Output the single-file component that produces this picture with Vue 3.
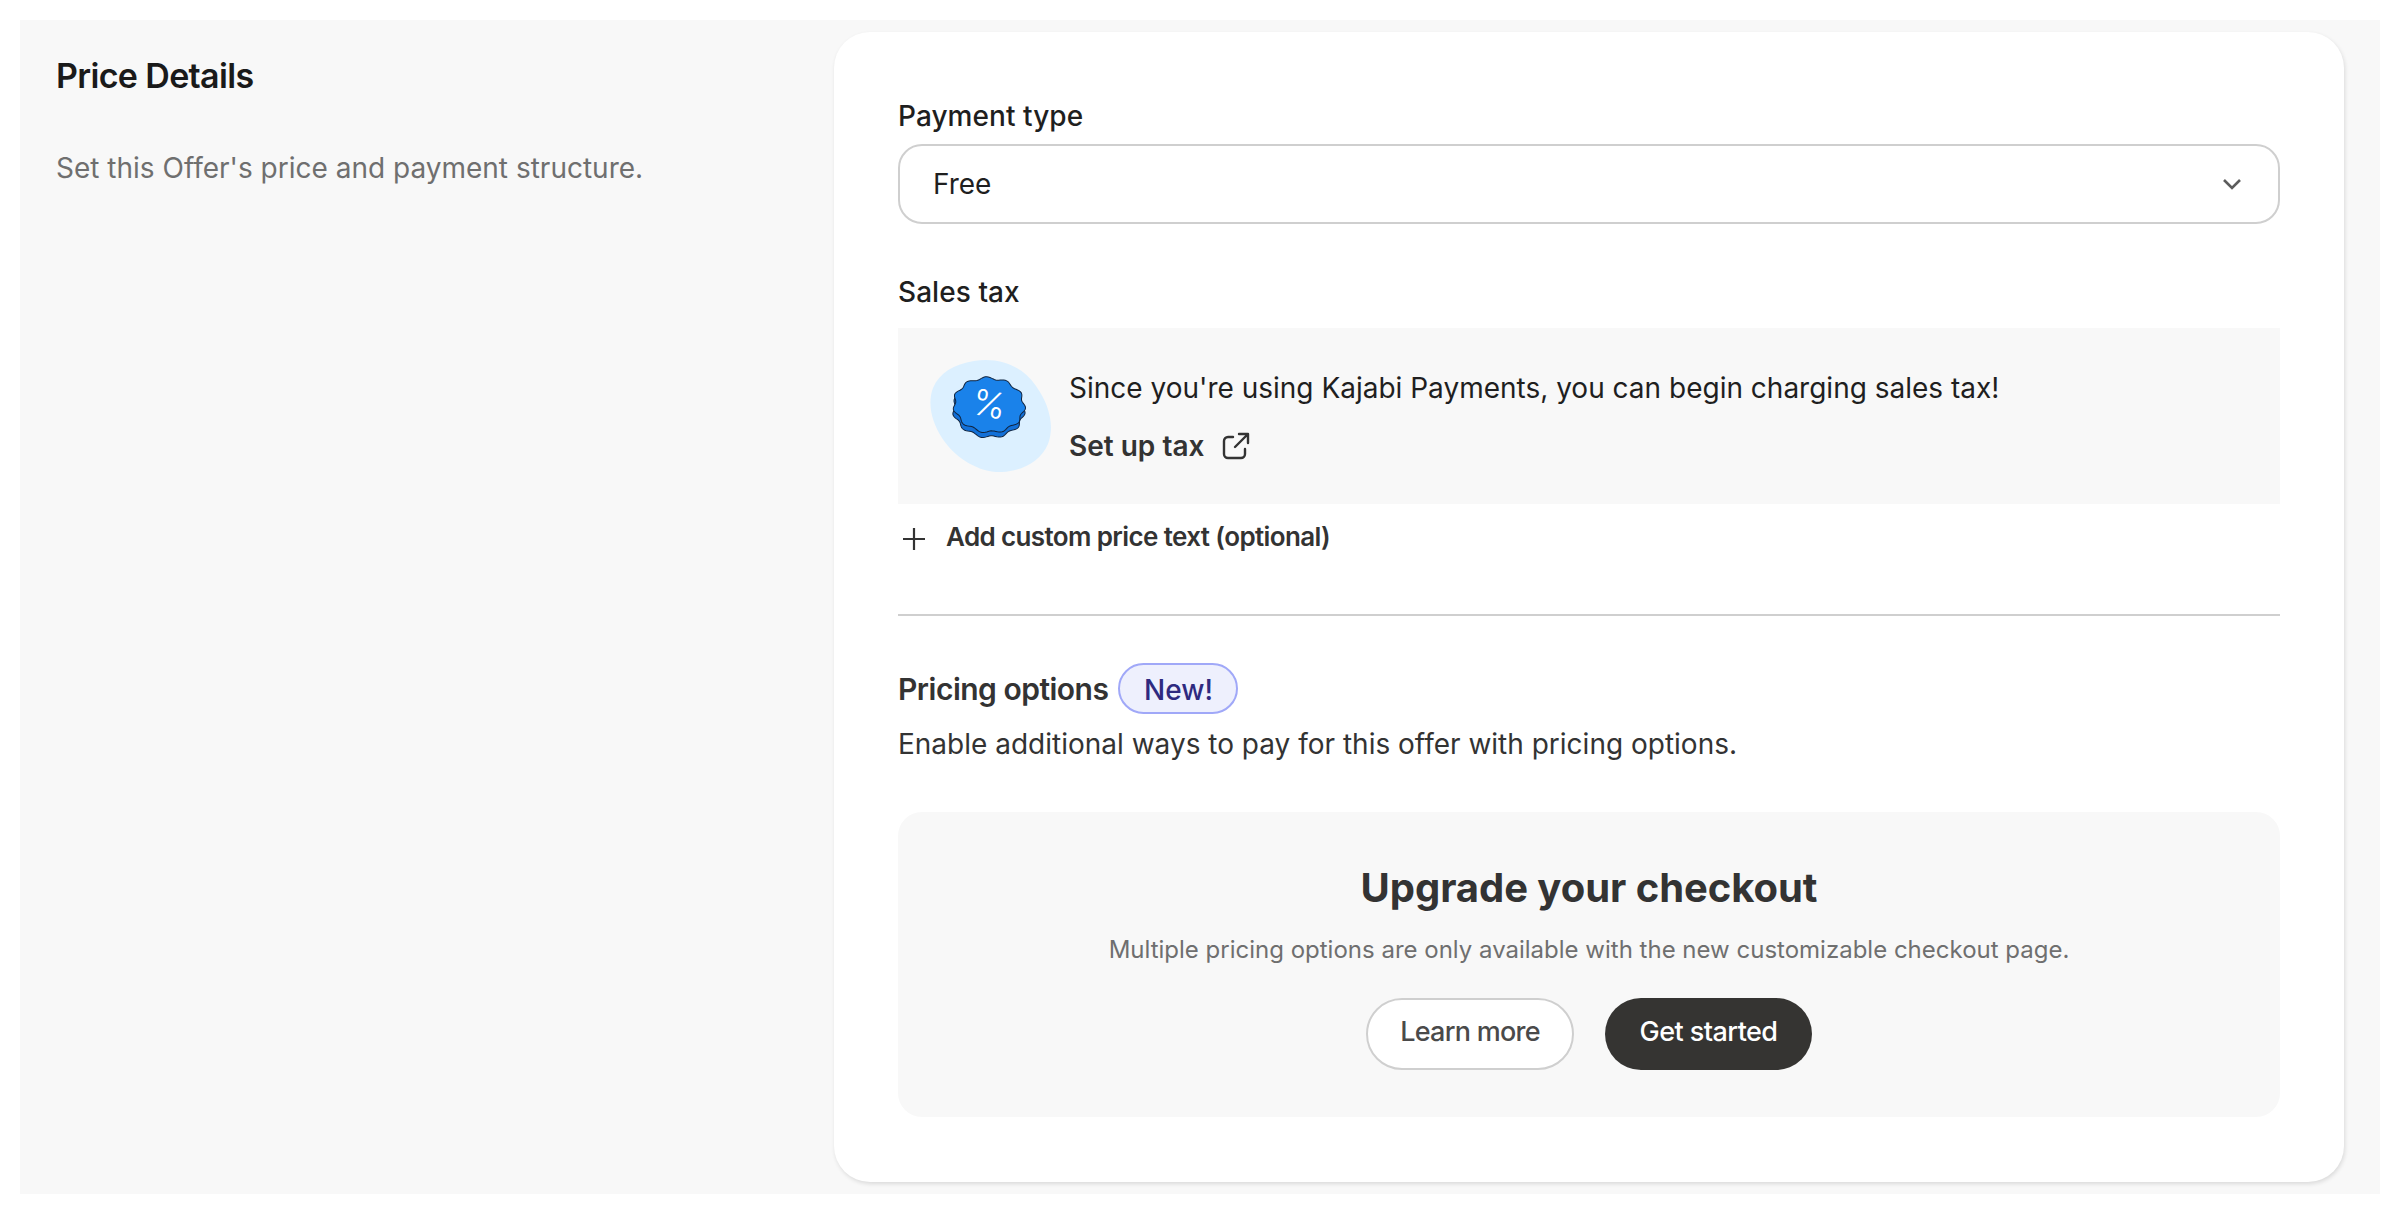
<script setup>
// wavy sticker outline for the tax badge
function wavy(cx, cy, rx, ry, lobes, amp) {
  let d = '';
  const steps = 144;
  for (let i = 0; i < steps; i++) {
    const a = (i / steps) * Math.PI * 2;
    const k = 1 + amp * Math.cos(a * lobes);
    const x = cx + Math.cos(a) * rx * k;
    const y = cy + Math.sin(a) * ry * k;
    d += (i ? 'L' : 'M') + x.toFixed(2) + ' ' + y.toFixed(2);
  }
  return d + 'Z';
}

const topFace = wavy(59, 43, 35, 27, 11, 0.045);
const bottomFace = wavy(59, 48, 35, 27, 11, 0.045);
</script>

<template>
  <div class="panel">
    <div class="intro">
      <h2 class="intro-title">Price Details</h2>
      <p class="intro-text">Set this Offer's price and payment structure.</p>
    </div>

    <div class="card">
      <label class="field-label">Payment type</label>
      <div class="select">
        <span>Free</span>
        <svg class="chevron" width="20" height="12" viewBox="0 0 20 12" fill="none">
          <path d="M2 2l8 8 8-8" stroke="#5c5c5c" stroke-width="2.6" />
        </svg>
      </div>

      <div class="field-label tax-label">Sales tax</div>
      <div class="tax-box">
        <svg class="tax-art" width="122" height="112" viewBox="0 0 122 112">
          <path
            d="M44 1C70 -3 92 6 106 26C119 44 125 66 118 84C110 103 88 113 66 112C44 110 24 96 12 78C2 62 -3 44 3 28C9 13 24 4 44 1Z"
            fill="#dcf0ff"
          />
          <g transform="translate(0 2) rotate(5 59 44)">
            <path :d="bottomFace" fill="#1270d8" stroke="#10243f" stroke-width="1" />
            <path :d="topFace" fill="#1a82ea" stroke="#10243f" stroke-width="1" />
            <text class="tax-percent" x="59" y="55" text-anchor="middle" transform="rotate(6 59 44)">%</text>
          </g>
        </svg>
        <div class="tax-copy">
          <div class="tax-text">Since you're using Kajabi Payments, you can begin charging sales tax!</div>
          <div class="tax-link">
            <span>Set up tax</span>
            <svg width="28" height="28" viewBox="0 0 28 28" fill="none" stroke="#333" stroke-width="2.4" stroke-linecap="round" stroke-linejoin="round">
              <path d="M11 5H6a4 4 0 0 0-4 4v13a4 4 0 0 0 4 4h13a4 4 0 0 0 4-4v-5" />
              <path d="M13 15L26 2M17 2h9v9" />
            </svg>
          </div>
        </div>
      </div>

      <div class="add-row">
        <svg class="add-icon" width="22" height="22" viewBox="0 0 22 22" fill="none" stroke="#333" stroke-width="2.2">
          <path d="M11 0v22M0 11h22" />
        </svg>
        <span>Add custom price text (optional)</span>
      </div>

      <hr class="divider" />

      <div class="options-head">
        <span class="options-title">Pricing options</span>
        <span class="new-badge">New!</span>
      </div>
      <p class="options-text">Enable additional ways to pay for this offer with pricing options.</p>

      <div class="upgrade">
        <h3 class="upgrade-title">Upgrade your checkout</h3>
        <p class="upgrade-text">Multiple pricing options are only available with the new customizable checkout page.</p>
        <div class="upgrade-actions">
          <button class="btn btn-light">Learn more</button>
          <button class="btn btn-dark">Get started</button>
        </div>
      </div>
    </div>
  </div>
</template>

<style>
html, body {
  background: #fff;
}
</style>

<style scoped>
.panel {
  margin: 20px 20px 0;
  padding: 12px 36px 12px 36px;
  height: 1174px;
  box-sizing: border-box;
  display: flex;
  justify-content: space-between;
  background: #f8f8f8;
  font-family: Inter, "Liberation Sans", sans-serif;
  color: #333;
}

.intro-title {
  margin: 22px 0 0;
  font-size: 34px;
  line-height: 44px;
  font-weight: 600;
  letter-spacing: -0.65px;
  color: #1a1a1a;
}

.intro-text {
  margin: 50px 0 0;
  font-size: 28px;
  line-height: 40px;
  color: #6f6f6f;
}

.card {
  width: 1510px;
  height: 1150px;
  box-sizing: border-box;
  padding: 64px;
  background: #fff;
  border-radius: 36px;
  box-shadow: 1px 2px 4px rgba(0, 0, 0, 0.12);
}

.field-label {
  display: block;
  font-size: 28px;
  line-height: 40px;
  font-weight: 500;
  letter-spacing: 0.06px;
  color: #1f1f1f;
}

.select {
  margin-top: 8px;
  height: 80px;
  box-sizing: border-box;
  padding: 0 36px 0 33px;
  display: flex;
  align-items: center;
  justify-content: space-between;
  border: 2px solid #cfcfcf;
  border-radius: 24px;
  font-size: 28px;
  color: #1f1f1f;
}

.tax-label {
  margin-top: 48px;
}

.tax-box {
  margin-top: 16px;
  height: 176px;
  box-sizing: border-box;
  padding: 32px 32px 0;
  display: flex;
  gap: 17px;
  background: #f8f8f8;
}

.tax-percent {
  font-size: 36px;
  font-weight: 300;
  fill: #fff;
}

.tax-text {
  margin-top: 8px;
  font-size: 28px;
  line-height: 40px;
  color: #1f1f1f;
}

.tax-link {
  margin-top: 18px;
  display: flex;
  align-items: center;
  gap: 18px;
  font-size: 28px;
  line-height: 40px;
  font-weight: 600;
  color: #333;
}

.add-row {
  margin-top: 13px;
  padding-left: 5px;
  display: flex;
  align-items: center;
  gap: 21px;
  font-size: 26px;
  line-height: 40px;
  font-weight: 600;
  letter-spacing: -0.62px;
}

.add-icon {
  margin-top: 3px;
}

.divider {
  margin: 57px 0 0;
  border: 0;
  border-top: 2px solid #cfcfcf;
}

.options-head {
  margin-top: 47px;
  display: flex;
  align-items: center;
  gap: 10px;
}

.options-title {
  font-size: 30px;
  font-weight: 600;
  letter-spacing: -0.5px;
}

.new-badge {
  width: 120px;
  height: 51px;
  box-sizing: border-box;
  padding-top: 2px;
  display: flex;
  align-items: center;
  justify-content: center;
  border: 2px solid #a0a8f8;
  border-radius: 26px;
  background: #eef0fd;
  font-size: 28px;
  font-weight: 500;
  color: #2e2a80;
}

.options-text {
  margin: 10px 0 0;
  font-size: 28px;
  line-height: 40px;
  color: #333;
}

.upgrade {
  margin-top: 48px;
  height: 305px;
  box-sizing: border-box;
  padding-top: 50px;
  text-align: center;
  background: #f8f8f8;
  border-radius: 24px;
}

.upgrade-title {
  margin: 0;
  font-size: 40px;
  line-height: 52px;
  font-weight: 700;
  letter-spacing: -0.05px;
}

.upgrade-text {
  margin: 18px 0 0;
  font-size: 24px;
  line-height: 36px;
  color: #6f6f6f;
}

.upgrade-actions {
  margin-top: 30px;
  display: flex;
  justify-content: center;
  gap: 31px;
}

.btn {
  width: 207px;
  height: 72px;
  box-sizing: border-box;
  padding: 0 0 6px;
  border-radius: 36px;
  font-family: inherit;
  font-size: 27px;
  font-weight: 500;
  letter-spacing: -0.75px;
}

.btn-light {
  width: 208px;
  background: #fff;
  border: 2px solid #cfcfcf;
  color: #4a4a4a;
}

.btn-dark {
  background: #353432;
  border: 0;
  letter-spacing: -0.55px;
  color: #fff;
}
</style>
